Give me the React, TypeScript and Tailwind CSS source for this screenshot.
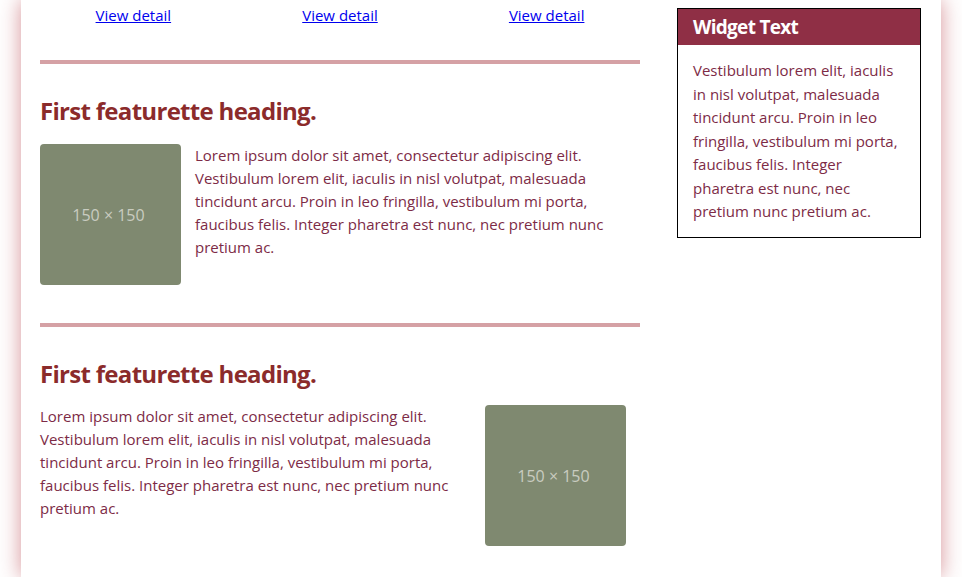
const para =
  'Lorem ipsum dolor sit amet, consectetur adipiscing elit. Vestibulum lorem elit, iaculis in nisl volutpat, malesuada tincidunt arcu. Proin in leo fringilla, vestibulum mi porta, faucibus felis. Integer pharetra est nunc, nec pretium nunc pretium ac.';

function Placeholder() {
  return (
    <div className="w-[141px] h-[141px] shrink-0 rounded-[4px] bg-[#7f8970] flex items-center justify-center pr-[4px] text-[16px] text-[#c9ccc0]">
      150 × 150
    </div>
  );
}

function Divider() {
  return <div className="h-[4px] bg-[#d5a1a5]" />;
}

export default function App() {
  return (
    <div className="min-h-screen bg-white font-['Open_Sans',sans-serif] overflow-hidden">
      <div className="w-[920px] min-h-screen mx-auto bg-white shadow-[0_0_20px_rgba(175,40,50,0.5)] px-[19px] pt-[4px] flex gap-[37px]">
        {/* Main column */}
        <div className="w-[600px] shrink-0">
          <div className="grid grid-cols-3 w-[620px] -ml-[10px] text-[15px] leading-[23px]">
            {[0, 1, 2].map((i) => (
              <div key={i} className="text-center">
                <a href="#" className="text-[#0000ee] underline">
                  View detail
                </a>
              </div>
            ))}
          </div>

          <div className="mt-[33px]">
            <Divider />
          </div>

          <h2 className="mt-[34px] text-[24px] leading-[26px] font-bold tracking-[-0.7px] text-[#8b2b2b]">
            First featurette heading.
          </h2>
          <div className="mt-[20px] flex gap-[14px]">
            <Placeholder />
            <p className="w-[430px] text-[15px] leading-[23px] text-[#7d2b46]">{para}</p>
          </div>

          <div className="mt-[38px]">
            <Divider />
          </div>

          <h2 className="mt-[34px] text-[24px] leading-[26px] font-bold tracking-[-0.7px] text-[#8b2b2b]">
            First featurette heading.
          </h2>
          <div className="mt-[18px] flex gap-[15px]">
            <p className="w-[430px] text-[15px] leading-[23px] text-[#7d2b46]">{para}</p>
            <Placeholder />
          </div>
        </div>

        {/* Sidebar */}
        <aside className="w-[244px] shrink-0 mt-[4px] self-start border border-black">
          <div className="h-[36px] bg-[#8f2f45] px-[15px] flex items-center text-[19px] font-bold tracking-[-0.7px] text-white">
            Widget Text
          </div>
          <p className="px-[15px] pt-[14px] pb-[13px] text-[15px] leading-[23.5px] text-[#7d2b46]">
            Vestibulum lorem elit, iaculis in nisl volutpat, malesuada tincidunt arcu. Proin in leo fringilla,
            vestibulum mi porta, faucibus felis. Integer pharetra est nunc, nec pretium nunc pretium ac.
          </p>
        </aside>
      </div>
    </div>
  );
}
